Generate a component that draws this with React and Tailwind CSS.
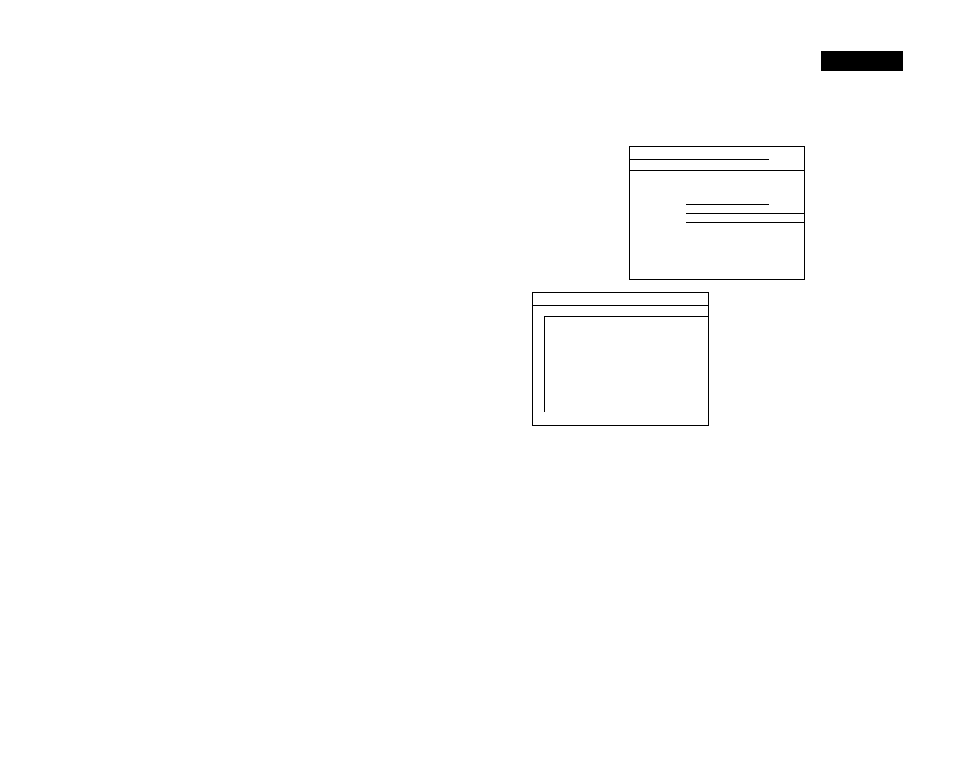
export default function App() {
  return (
    <div className="w-[954px] h-[784px] bg-white pt-[51px] font-['Liberation_Sans',sans-serif]">
      {/* top right button */}
      <div className="flex justify-end pr-[51px]">
        <div className="w-[82px] h-[20px] bg-black" />
      </div>

      {/* upper panel */}
      <div className="mt-[75px] ml-[629px] w-[176px] h-[134px] border border-black">
        <div className="w-[139px] h-[13px] border-b border-black" />
        <div className="h-[11px] border-b border-black" />
        <div className="ml-[56px] w-[83px] h-[34px] border-b border-black" />
        <div className="ml-[56px] h-[9px] border-b border-black" />
        <div className="ml-[56px] h-[9px] border-b border-black" />
      </div>

      {/* lower panel */}
      <div className="mt-[12px] ml-[532px] w-[177px] h-[134px] border border-black">
        <div className="h-[13px] border-b border-black" />
        <div className="mt-[10px] ml-[11px] h-[96px] border-t border-l border-black" />
      </div>
    </div>
  );
}
